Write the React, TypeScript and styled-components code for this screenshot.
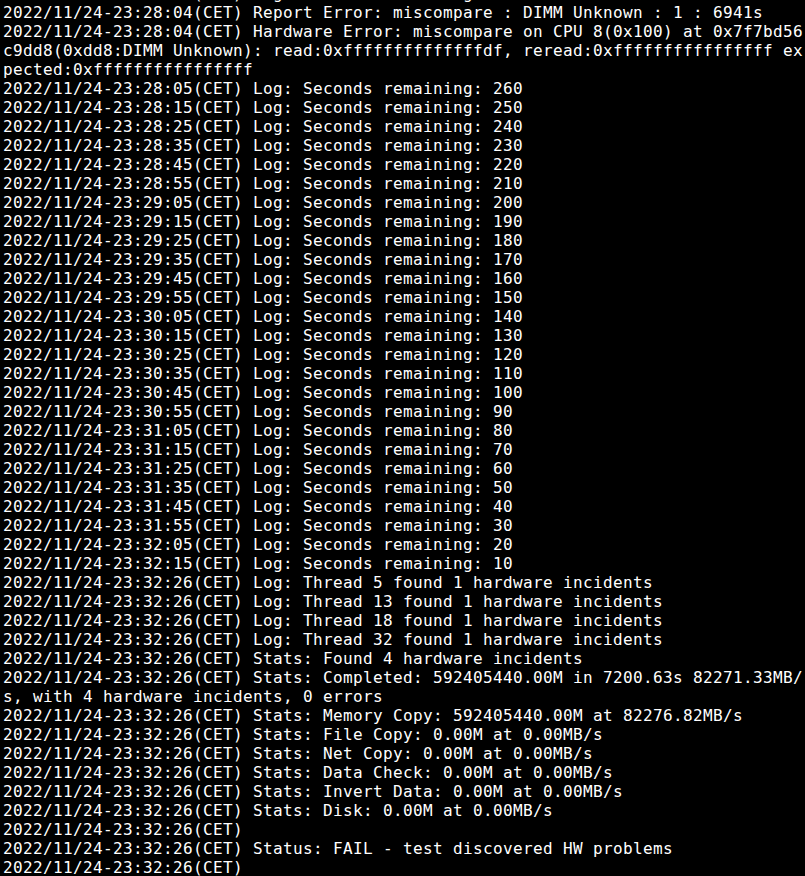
import React from "react";
import styled, { createGlobalStyle } from "styled-components";

const Global = createGlobalStyle`
  html, body {
    margin: 0;
    padding: 0;
    background: #000;
  }
  #root {
    background: #000;
  }
`;

const Terminal = styled.div`
  box-sizing: border-box;
  width: 805px;
  height: 876px;
  overflow: hidden;
  background: #000;
  color: #ffffff;
  padding-left: 3px;
  font-family: "DejaVu Sans Mono", monospace;
  font-size: 16px;
  letter-spacing: 0.367px;
  line-height: 19px;
`;

/* Scrollback: the terminal has scrolled so only the bottom of one earlier line shows */
const Scrollback = styled.div`
  margin-top: -16px;
`;

const Line = styled.div`
  white-space: pre;
  height: 19px;
`;

const P = "2022/11/24-23:";

const lines: string[] = [
  `${P}27:55(CET) Log: Seconds remaining: 270`,
  `${P}28:04(CET) Report Error: miscompare : DIMM Unknown : 1 : 6941s`,
  `${P}28:04(CET) Hardware Error: miscompare on CPU 8(0x100) at 0x7f7bd56`,
  `c9dd8(0xdd8:DIMM Unknown): read:0xffffffffffffffdf, reread:0xffffffffffffffff ex`,
  `pected:0xffffffffffffffff`,
];

const times = [
  "28:05", "28:15", "28:25", "28:35", "28:45", "28:55",
  "29:05", "29:15", "29:25", "29:35", "29:45", "29:55",
  "30:05", "30:15", "30:25", "30:35", "30:45", "30:55",
  "31:05", "31:15", "31:25", "31:35", "31:45", "31:55",
  "32:05", "32:15",
];
times.forEach((t, i) => {
  lines.push(`${P}${t}(CET) Log: Seconds remaining: ${260 - i * 10}`);
});

const T = `${P}32:26(CET)`;
[5, 13, 18, 32].forEach((n) => {
  lines.push(`${T} Log: Thread ${n} found 1 hardware incidents`);
});
lines.push(
  `${T} Stats: Found 4 hardware incidents`,
  `${T} Stats: Completed: 592405440.00M in 7200.63s 82271.33MB/`,
  `s, with 4 hardware incidents, 0 errors`,
  `${T} Stats: Memory Copy: 592405440.00M at 82276.82MB/s`,
  `${T} Stats: File Copy: 0.00M at 0.00MB/s`,
  `${T} Stats: Net Copy: 0.00M at 0.00MB/s`,
  `${T} Stats: Data Check: 0.00M at 0.00MB/s`,
  `${T} Stats: Invert Data: 0.00M at 0.00MB/s`,
  `${T} Stats: Disk: 0.00M at 0.00MB/s`,
  `${T}`,
  `${T} Status: FAIL - test discovered HW problems`,
  `${T}`
);

export default function App() {
  return (
    <>
      <Global />
      <Terminal>
        <Scrollback>
          {lines.map((l, i) => (
            <Line key={i}>{l}</Line>
          ))}
        </Scrollback>
      </Terminal>
    </>
  );
}
